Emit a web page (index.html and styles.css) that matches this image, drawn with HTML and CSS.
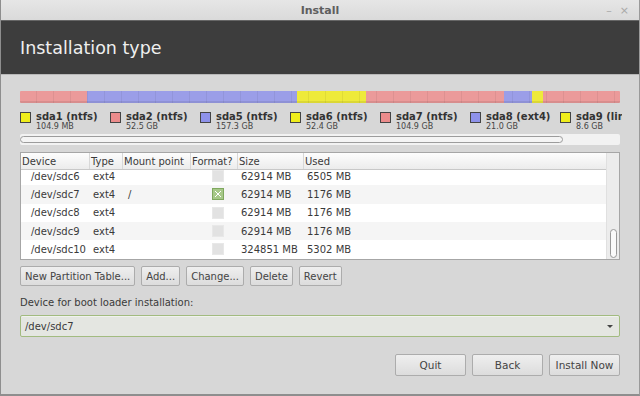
FILE: index.html
```html
<!DOCTYPE html>
<html>
<head>
<meta charset="utf-8">
<link rel="stylesheet" href="styles.css">
</head>
<body>
<div class="window">
  <div class="titlebar">
    <span></span>
    <span class="title">Install</span>
    <span class="controls"><span class="min">–</span><span class="close">×</span></span>
  </div>
  <div class="header">Installation type</div>
  <div class="content">
    <div class="pbar">
      <div class="seg red" style="width:67px"></div>
      <div class="seg blue" style="width:210px"></div>
      <div class="seg yellow" style="width:69px"></div>
      <div class="seg red" style="width:138px"></div>
      <div class="seg blue" style="width:28px"></div>
      <div class="seg yellow" style="width:11px"></div>
      <div class="seg red" style="flex:1"></div>
    </div>
    <div class="legend">
      <div class="item"><span class="sw yellow"></span><div><div class="lname">sda1 (ntfs)</div><div class="lsize">104.9 MB</div></div></div>
      <div class="item"><span class="sw red"></span><div><div class="lname">sda2 (ntfs)</div><div class="lsize">52.5 GB</div></div></div>
      <div class="item"><span class="sw blue"></span><div><div class="lname">sda5 (ntfs)</div><div class="lsize">157.3 GB</div></div></div>
      <div class="item"><span class="sw yellow"></span><div><div class="lname">sda6 (ntfs)</div><div class="lsize">52.4 GB</div></div></div>
      <div class="item"><span class="sw red"></span><div><div class="lname">sda7 (ntfs)</div><div class="lsize">104.9 GB</div></div></div>
      <div class="item"><span class="sw blue"></span><div><div class="lname">sda8 (ext4)</div><div class="lsize">21.0 GB</div></div></div>
      <div class="item"><span class="sw yellow"></span><div><div class="lname">sda9 (linux-swap)</div><div class="lsize">8.6 GB</div></div></div>
    </div>
    <div class="hscroll"><div class="hthumb"></div></div>
    <div class="tree">
      <div class="tree-main">
        <div class="row head">
          <div>Device</div><div>Type</div><div>Mount point</div><div>Format?</div><div>Size</div><div>Used</div>
        </div>
        <div class="rows">
          <div class="row"><div class="dev">/dev/sdc6</div><div>ext4</div><div></div><div class="fmt"><span class="cb"></span></div><div>62914 MB</div><div>6505 MB</div></div>
          <div class="row alt"><div class="dev">/dev/sdc7</div><div>ext4</div><div class="mnt">/</div><div class="fmt"><span class="cb on"></span></div><div>62914 MB</div><div>1176 MB</div></div>
          <div class="row"><div class="dev">/dev/sdc8</div><div>ext4</div><div></div><div class="fmt"><span class="cb"></span></div><div>62914 MB</div><div>1176 MB</div></div>
          <div class="row alt"><div class="dev">/dev/sdc9</div><div>ext4</div><div></div><div class="fmt"><span class="cb"></span></div><div>62914 MB</div><div>1176 MB</div></div>
          <div class="row"><div class="dev">/dev/sdc10</div><div>ext4</div><div></div><div class="fmt"><span class="cb"></span></div><div>324851 MB</div><div>5302 MB</div></div>
        </div>
      </div>
      <div class="vscroll"><div class="vthumb"></div></div>
    </div>
    <div class="actions">
      <button class="btn">New Partition Table...</button>
      <button class="btn">Add...</button>
      <button class="btn">Change...</button>
      <button class="btn">Delete</button>
      <button class="btn">Revert</button>
    </div>
    <div class="label">Device for boot loader installation:</div>
    <div class="combo"><span>/dev/sdc7</span><span class="arrow"></span></div>
    <div class="footer">
      <button class="btn big">Quit</button>
      <button class="btn big">Back</button>
      <button class="btn big">Install Now</button>
    </div>
  </div>
</div>
</body>
</html>
```
FILE: styles.css
```css
html, body { margin: 0; padding: 0; }
body {
  width: 640px; height: 396px; overflow: hidden;
  font-family: "DejaVu Sans", sans-serif; font-size: 10px; color: #3a3a3a;
  background: #d6d6d6;
}
.window {
  width: 640px; height: 396px; box-sizing: border-box;
  border-left: 1px solid #8e8e8e; border-right: 1px solid #9a9a9a; border-bottom: 2px solid #8e8e8e;
  background: #d7d7d7;
  display: flex; flex-direction: column;
}
.titlebar {
  height: 20px; flex: 0 0 20px;
  background: linear-gradient(#e6e6e6, #dadada);
  display: grid; grid-template-columns: 1fr auto 1fr; align-items: center;
}
.title { font-weight: bold; font-size: 11px; color: #5e5e5e; }
.controls { justify-self: end; display: flex; gap: 8px; padding-right: 10px; color: #a8a8a8; font-size: 11px; }
.header {
  height: 55px; flex: 0 0 55px; box-sizing: border-box;
  background: #3d3d3d; color: #efefef;
  font-size: 17.5px; padding-left: 19px;
  display: flex; align-items: center;
  border-top: 1px solid #666; border-bottom: 1px solid #b8b8b8;
}
.content { padding: 16px 19px 0 19px; display: flex; flex-direction: column; }
.pbar {
  height: 12px; display: flex; border-radius: 1px; overflow: hidden;
  position: relative;
}
.pbar::after {
  content: ""; position: absolute; inset: 0;
  background: repeating-linear-gradient(90deg, transparent 0 16px, rgba(0,0,0,0.06) 16px 17px);
  border-bottom: 2px solid rgba(0,0,0,0.08);
}
.seg { height: 100%; }
.seg.red { background: #eb9a9a; }
.seg.blue { background: #9b9ee8; }
.seg.yellow { background: #eeea3a; }
.legend { display: flex; margin-top: 8px; height: 21px; overflow: hidden; width: 602px; }
.item { flex: 0 0 90px; display: flex; align-items: flex-start; white-space: nowrap; }
.sw { width: 9px; height: 9px; border: 1px solid #444; margin-top: 1px; margin-right: 5px; flex: 0 0 auto; }
.sw.red { background: #eb8c8c; }
.sw.blue { background: #8e92ea; }
.sw.yellow { background: #f0ee1c; }
.lname { font-weight: bold; font-size: 10px; color: #333; line-height: 11px; }
.lsize { font-size: 8px; color: #444; line-height: 10px; padding-left: 0; }
.hscroll {
  margin-top: 2px; height: 11px; background: #f2f2f2; border-radius: 2px;
  padding: 2px 0; box-sizing: border-box;
}
.hthumb {
  width: 543px; height: 7px; box-sizing: border-box;
  border: 1px solid #9c9c9c; border-radius: 4px; background: #f4f4f4;
}
.tree {
  margin-top: 7px; height: 108px; box-sizing: border-box;
  border: 1px solid #a6a6a6; display: flex; background: #fff;
}
.tree-main { flex: 1; display: flex; flex-direction: column; overflow: hidden; }
.row {
  display: grid; grid-template-columns: 69px 33px 68px 47px 66px 1fr;
  height: 18.3px; flex: 0 0 auto; align-items: center; background: #fff;
}
.row > div { padding-left: 3px; white-space: nowrap; }
.row.alt { background: #f5f5f5; }
.row.head {
  height: 16px; background: linear-gradient(#fdfdfd, #ececec);
  border-bottom: 1px solid #c8c8c8; color: #3a3a3a; position: relative; z-index: 1;
}
.row.head > div { border-right: 1px solid #d8d8d8; height: 100%; display: flex; align-items: center; box-sizing: border-box; padding-left: 1px; }
.row.head > div:last-child { border-right: none; }
.rows { flex: 1; margin-top: -3px; }
.dev { padding-left: 10px !important; }
.mnt { padding-left: 5px !important; }
.fmt { display: flex; justify-content: center; padding-left: 6px !important; }
.cb { width: 10px; height: 10px; background: #e2e2e2; border: 1px solid #e8e8e8; display: inline-block; }
.cb.on { background: #a6c888; border: 1px solid #7fa85e; position: relative; }
.cb.on::after {
  content: ""; position: absolute; left: 2px; top: 2px; width: 6px; height: 6px;
  background:
    linear-gradient(45deg, transparent 42%, #fff 42% 58%, transparent 58%),
    linear-gradient(-45deg, transparent 42%, #fff 42% 58%, transparent 58%);
}
.vscroll { width: 13px; background: #ececec; border-left: 1px solid #e0e0e0; display: flex; flex-direction: column; justify-content: flex-end; padding-bottom: 1px; box-sizing: border-box; align-items: center; }
.vthumb { width: 7px; height: 29px; border: 1px solid #999; border-radius: 4px; background: #fafafa; box-sizing: border-box; }
.actions { display: flex; gap: 6px; margin-top: 6px; }
.btn {
  font-family: "DejaVu Sans", sans-serif; font-size: 10px; color: #444;
  height: 20px; padding: 0 4px; border: 1px solid #acacac; border-radius: 2px;
  background: linear-gradient(#efefef, #dcdcdc); margin: 0;
}
.label { margin-top: 10px; color: #3a3a3a; line-height: 14px; }
.combo {
  margin-top: 5px; height: 22px; box-sizing: border-box;
  border: 1px solid #a2bb80; border-radius: 2px; background: #e4e6e1;
  display: flex; align-items: center; justify-content: space-between; padding: 0 5px 0 4px;
  box-shadow: inset 0 1px 0 #f0f2ee;
}
.arrow { width: 0; height: 0; border-left: 3px solid transparent; border-right: 3px solid transparent; border-top: 3px solid #444; margin-right: 1px; }
.footer { display: flex; justify-content: flex-end; gap: 6px; margin-top: 17px; }
.btn.big { width: 71px; height: 22px; padding: 0; font-size: 10.5px; }
```
